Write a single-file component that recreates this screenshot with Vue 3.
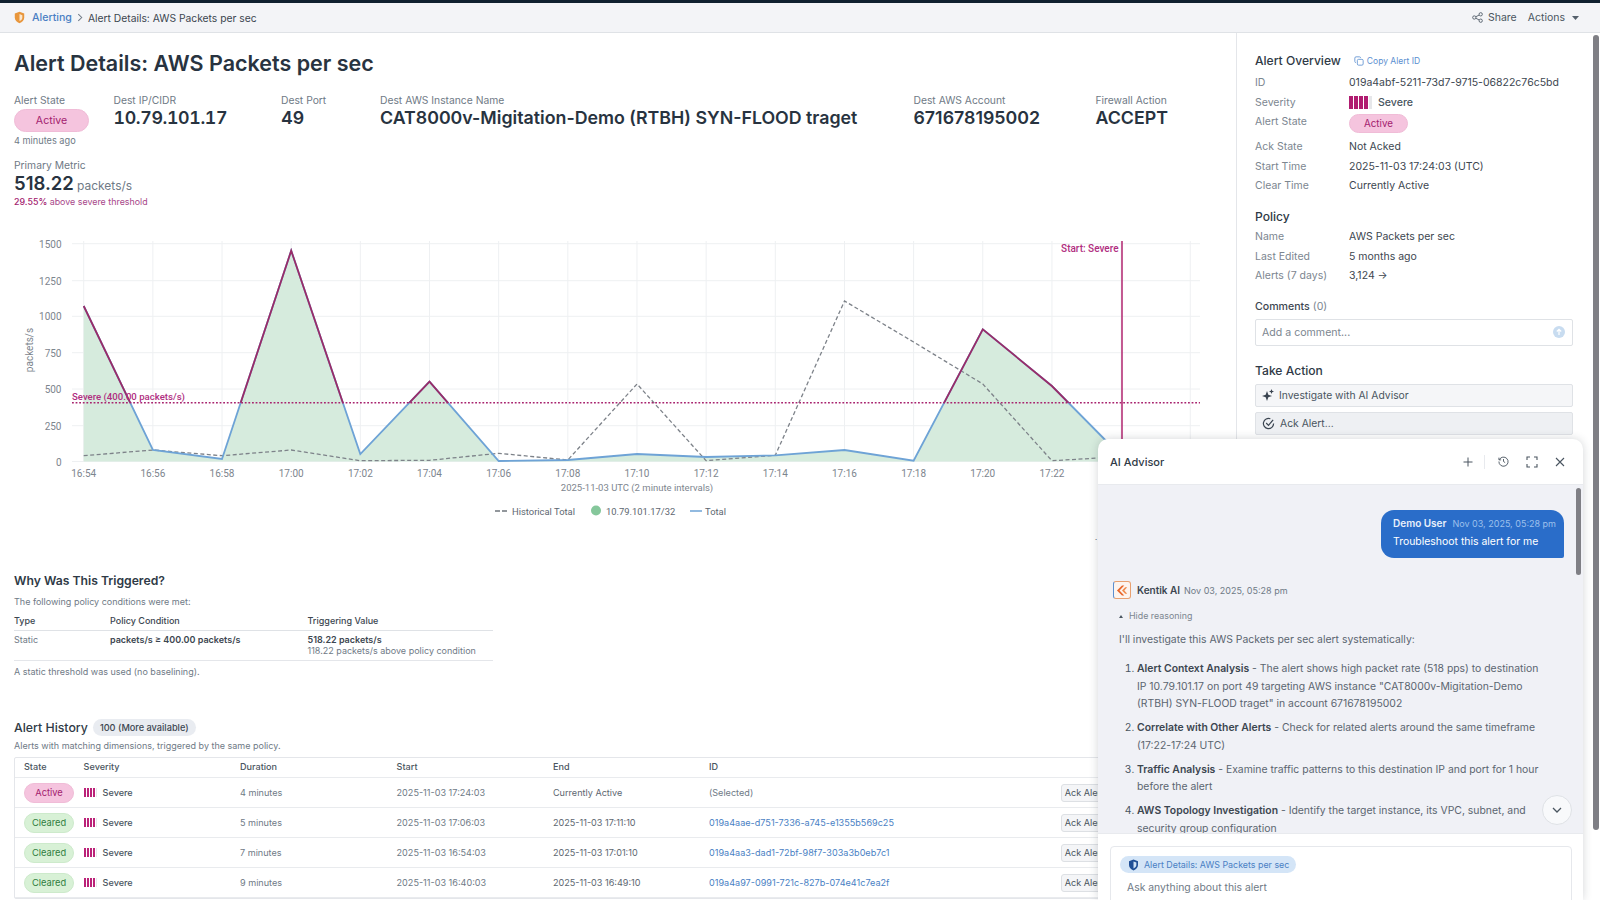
<script setup>
import { computed } from 'vue'

const X0 = 83.7
const DX = 69.16
const xAt = (i) => X0 + i * DX
const top = [306, 450, 459, 250.7, 454, 381.7, 461, 460, 454, 457, 455.3, 450, 460.7, 329.3, 386, 456]
const hist = [455.7, 450, 455.7, 450, 460.7, 460.3, 453.3, 460, 384, 460.7, 455.3, 301, 342, 384, 460.7, 456.7]
const pts = (a) => a.map((y, i) => `${xAt(i).toFixed(1)},${y}`).join(' ')
const linePts = computed(() => pts(top))
const histPts = computed(() => pts(hist))
const areaPts = computed(() => `${X0},461.5 ${pts(top)} ${xAt(15).toFixed(1)},461.5`)
const ticks = ['16:54','16:56','16:58','17:00','17:02','17:04','17:06','17:08','17:10','17:12','17:14','17:16','17:18','17:20','17:22','17:24','17:26']
const yTicks = [['1500',243.7],['1250',280.7],['1000',316.3],['750',352.7],['500',389],['250',425.7],['0',461.5]]

const metrics = [
  { label: 'Dest IP/CIDR', value: '10.79.101.17', tab: true },
  { label: 'Dest Port', value: '49' },
  { label: 'Dest AWS Instance Name', value: 'CAT8000v-Migitation-Demo (RTBH) SYN-FLOOD traget' },
  { label: 'Dest AWS Account', value: '671678195002' },
  { label: 'Firewall Action', value: 'ACCEPT' },
]
const history = [
  { state: 'Active', dur: '4 minutes', start: '2025-11-03 17:24:03', end: 'Currently Active', id: '(Selected)' },
  { state: 'Cleared', dur: '5 minutes', start: '2025-11-03 17:06:03', end: '2025-11-03 17:11:10', id: '019a4aae-d751-7336-a745-e1355b569c25', link: true },
  { state: 'Cleared', dur: '7 minutes', start: '2025-11-03 16:54:03', end: '2025-11-03 17:01:10', id: '019a4aa3-dad1-72bf-98f7-303a3b0eb7c1', link: true },
  { state: 'Cleared', dur: '9 minutes', start: '2025-11-03 16:40:03', end: '2025-11-03 16:49:10', id: '019a4a97-0991-721c-827b-074e41c7ea2f', link: true },
]
const overview = [
  { k: 'ID', v: '019a4abf-5211-73d7-9715-06822c76c5bd' },
  { k: 'Severity', sev: true },
  { k: 'Alert State', badge: true },
  { k: 'Ack State', v: 'Not Acked' },
  { k: 'Start Time', v: '2025-11-03 17:24:03 (UTC)' },
  { k: 'Clear Time', v: 'Currently Active' },
]
const policy = [
  { k: 'Name', v: 'AWS Packets per sec' },
  { k: 'Last Edited', v: '5 months ago' },
  { k: 'Alerts (7 days)', v: '3,124 →' },
]
const steps = [
  { b: 'Alert Context Analysis', t: ' - The alert shows high packet rate (518 pps) to destination IP 10.79.101.17 on port 49 targeting AWS instance "CAT8000v-Migitation-Demo (RTBH) SYN-FLOOD traget" in account 671678195002' },
  { b: 'Correlate with Other Alerts', t: ' - Check for related alerts around the same timeframe (17:22-17:24 UTC)' },
  { b: 'Traffic Analysis', t: ' - Examine traffic patterns to this destination IP and port for 1 hour before the alert' },
  { b: 'AWS Topology Investigation', t: ' - Identify the target instance, its VPC, subnet, and security group configuration' },
]
</script>

<template>
  <div class="app">
    <div class="topline"></div>
    <header class="crumbs">
      <svg class="shield" width="11" height="13" viewBox="0 0 14 16"><path d="M7 .8 13 3v5c0 3.6-2.6 6-6 7.2C3.600 14 1 11.600 1 8V3z" fill="#e8963c"/><path d="M7 3.600 10.600 5v3.200c0 2-1.500 3.400-3.600 4.300z" fill="#fbe6cc"/></svg>
      <a class="crumb-link">Alerting</a>
      <svg width="6" height="9" viewBox="0 0 7 10"><path d="M1.500 1 5.500 5l-4 4" fill="none" stroke="#6f7a86" stroke-width="1.200"/></svg>
      <span class="crumb-cur">Alert Details: AWS Packets per sec</span>
      <span class="grow"></span>
      <svg width="11" height="11" viewBox="0 0 12 12" fill="none" stroke="#55606c" stroke-width="1"><circle cx="2.500" cy="6" r="1.800"/><circle cx="9.500" cy="2.500" r="1.800"/><circle cx="9.500" cy="9.500" r="1.800"/><path d="M4.100 5.200 7.900 3.300M4.100 6.800l3.800 1.900"/></svg>
      <span class="top-act share">Share</span>
      <span class="top-act">Actions</span>
      <svg width="7" height="4" viewBox="0 0 7 4"><path d="M0 0h7L3.500 4z" fill="#55606c"/></svg>
    </header>

    <div class="body">
      <main class="main">
        <h1>Alert Details: AWS Packets per sec</h1>
        <div class="metric-row">
          <div class="state-col">
            <div class="lbl">Alert State</div>
            <span class="badge active big">Active</span>
            <div class="ago">4 minutes ago</div>
          </div>
          <div v-for="m in metrics" :key="m.label" class="metric">
            <div class="lbl">{{ m.label }}</div>
            <div class="val" :class="{ tab: m.tab }">{{ m.value }}</div>
          </div>
        </div>
        <div class="primary">
          <div class="lbl">Primary Metric</div>
          <div class="pv"><b>518.22</b> <span>packets/s</span></div>
          <div class="pct"><em>29.55%</em> above severe threshold</div>
        </div>

        <svg class="chart" width="1237" height="320" viewBox="0 220 1237 320">
          <defs>
            <clipPath id="above"><rect x="0" y="220" width="1237" height="182.700"/></clipPath>
          </defs>
          <g stroke="#eef0f2" stroke-width="1">
            <line v-for="t in yTicks" :key="t[0]" x1="72" x2="1200" :y1="t[1]" :y2="t[1]"/>
            <line v-for="(t, i) in ticks" :key="t" :x1="xAt(i)" :x2="xAt(i)" y1="241" y2="461.500"/>
          </g>
          <polygon :points="areaPts" fill="#d6ebdd"/>
          <polyline :points="histPts" fill="none" stroke="#7d8289" stroke-width="1.300" stroke-dasharray="4 2.500"/>
          <polyline :points="linePts" fill="none" stroke="#6ea3d6" stroke-width="1.800"/>
          <polyline :points="linePts" fill="none" stroke="#9a2c68" stroke-width="1.800" clip-path="url(#above)"/>
          <line x1="72" x2="1200" y1="402.700" y2="402.700" stroke="#a8246f" stroke-width="1.400" stroke-dasharray="1.800 1.800"/>
          <line x1="1122" x2="1122" y1="241" y2="461" stroke="#b0256f" stroke-width="1.500"/>
          <text x="72" y="400" class="t-sev small-sev">Severe (400.00 packets/s)</text>
          <text x="1118.500" y="252" text-anchor="end" class="t-sev">Start: Severe</text>
          <g class="t-axis">
            <text v-for="t in yTicks" :key="t[0]" x="61.500" :y="t[1] + 4" text-anchor="end">{{ t[0] }}</text>
            <text v-for="(t, i) in ticks.slice(0, 15)" :key="t" :x="xAt(i)" y="477" text-anchor="middle">{{ t }}</text>
            <text class="t-title" x="637" y="491" text-anchor="middle">2025-11-03 UTC (2 minute intervals)</text>
            <text transform="translate(33 350) rotate(-90)" text-anchor="middle">packets/s</text>
          </g>
          <g class="t-legend">
            <line x1="495" x2="507" y1="511" y2="511" stroke="#6f757c" stroke-width="1.300" stroke-dasharray="5 2"/>
            <text x="512" y="514.500">Historical Total</text>
            <circle cx="596" cy="510.500" r="5" fill="#85c79b"/>
            <text x="606" y="514.500">10.79.101.17/32</text>
            <line x1="690" x2="702" y1="511" y2="511" stroke="#6ea3d6" stroke-width="1.500"/>
            <text x="705" y="514.500">Total</text>
          </g>
          <text x="1095" y="546" class="t-legend">b</text>
        </svg>

        <section class="why">
          <h2>Why Was This Triggered?</h2>
          <p class="sub">The following policy conditions were met:</p>
          <div class="cond">
            <div class="cond-head"><span>Type</span><span>Policy Condition</span><span>Triggering Value</span></div>
            <div class="cond-row">
              <span class="muted">Static</span>
              <span class="strong">packets/s ≥ 400.00 packets/s</span>
              <span><span class="strong block">518.22 packets/s</span><span class="muted block">118.22 packets/s above policy condition</span></span>
            </div>
          </div>
          <p class="sub note">A static threshold was used (no baselining).</p>
        </section>

        <section class="hist">
          <div class="hist-title"><h2>Alert History</h2><span class="chip">100 (More available)</span></div>
          <p class="sub">Alerts with matching dimensions, triggered by the same policy.</p>
          <div class="table">
            <div class="tr th"><span>State</span><span>Severity</span><span>Duration</span><span>Start</span><span>End</span><span>ID</span><span></span></div>
            <div v-for="r in history" :key="r.start" class="tr">
              <span class="badge-cell"><span class="badge" :class="r.state === 'Active' ? 'active' : 'cleared'">{{ r.state }}</span></span>
              <span class="sev-cell"><span class="bars small"><i></i><i></i><i></i><i></i><i class="off"></i></span><span class="sev-name">Severe</span></span>
              <span class="muted">{{ r.dur }}</span>
              <span class="muted">{{ r.start }}</span>
              <span class="muted2">{{ r.end }}</span>
              <span :class="r.link ? 'link' : 'muted'">{{ r.id }}</span>
              <span class="badge-cell"><button class="ack">Ack Alert</button></span>
            </div>
          </div>
        </section>
      </main>

      <aside class="side">
        <div class="side-title"><h3>Alert Overview</h3>
          <span class="copy"><svg width="10" height="10" viewBox="0 0 12 12" fill="none" stroke="#5b8fd0" stroke-width="1"><rect x="4" y="4" width="7" height="7" rx="1.500"/><path d="M8 2.200A1.500 1.500 0 0 0 6.500 1h-4A1.500 1.500 0 0 0 1 2.500v4A1.500 1.500 0 0 0 2.200 8"/></svg>Copy Alert ID</span>
        </div>
        <dl class="kv">
          <template v-for="o in overview" :key="o.k">
            <dt>{{ o.k }}</dt>
            <dd v-if="o.sev" class="sev-cell"><span class="bars"><i></i><i></i><i></i><i></i><i class="off"></i></span><span class="sev-name big-sev">Severe</span></dd>
            <dd v-else-if="o.badge" class="badge-dd"><span class="badge active">Active</span></dd>
            <dd v-else>{{ o.v }}</dd>
          </template>
        </dl>
        <h3 class="policy">Policy</h3>
        <dl class="kv">
          <template v-for="o in policy" :key="o.k"><dt>{{ o.k }}</dt><dd>{{ o.v }}</dd></template>
        </dl>
        <div class="comments"><b>Comments</b> <span>(0)</span></div>
        <div class="comment-input"><span>Add a comment...</span>
          <svg width="12" height="12" viewBox="0 0 12 12"><circle cx="6" cy="6" r="6" fill="#c8dcf0"/><path d="M6 9V3.500M3.800 5.500 6 3.300l2.200 2.200" fill="none" stroke="#fff" stroke-width="1.200"/></svg>
        </div>
        <h3 class="take">Take Action</h3>
        <button class="side-btn"><svg width="12" height="12" viewBox="0 0 12 12" fill="#3a4450"><path d="M5 2 6.300 5.700 10 7 6.300 8.300 5 12 3.700 8.300 0 7 3.700 5.700z"/><path d="M9.500 0 10.200 1.800 12 2.500 10.200 3.200 9.500 5 8.800 3.200 7 2.500 8.800 1.800z"/></svg>Investigate with AI Advisor</button>
        <button class="side-btn gray"><svg width="13" height="13" viewBox="0 0 14 14" fill="none" stroke="#3a4450" stroke-width="1.300"><path d="M12.500 7A5.500 5.500 0 1 1 9 1.900"/><path d="M4.500 6.500 7 9l5-6"/></svg>Ack Alert...</button>
      </aside>
    </div>

    <div class="page-scroll"></div>

    <section class="advisor">
      <header class="adv-head">
        <span class="adv-title">AI Advisor</span>
        <span class="grow"></span>
        <svg class="hi plus" width="10" height="10" viewBox="0 0 10 10"><path d="M5 .5v9M.5 5h9" stroke="#4a5560" stroke-width="1"/></svg>
        <span class="vdiv"></span>
        <svg class="hi hist-i" width="11" height="11" viewBox="0 0 12 12" fill="none" stroke="#4a5560" stroke-width="1"><path d="M1.500 4A5 5 0 1 1 1 6"/><path d="M1 1.800V4.200h2.400M6 3.300V6l1.800 1.200"/></svg>
        <svg class="hi exp" width="12" height="12" viewBox="0 0 12 12" fill="none" stroke="#4a5560" stroke-width="1.100"><path d="M1 4V1h3M8 1h3v3M11 8v3H8M4 11H1V8"/></svg>
        <svg class="hi cls" width="10" height="10" viewBox="0 0 10 10"><path d="m1 1 8 8M9 1l-8 8" stroke="#4a5560" stroke-width="1.100"/></svg>
      </header>
      <div class="adv-body">
        <div class="bubble-row">
          <div class="bubble">
            <div class="bubble-top"><b>Demo User</b><span>Nov 03, 2025, 05:28 pm</span></div>
            <p>Troubleshoot this alert for me</p>
          </div>
        </div>
        <div class="ai-head">
          <span class="ai-logo"><svg width="12" height="11" viewBox="0 0 13 12"><path d="M6.500 0.500 1 6l5.500 5.500h2.500L3.800 6 9 0.500z" fill="#e8672c"/><path d="M10 2.500 6.500 6l3.500 3.500h2.200L9 6l3.200-3.500z" fill="#ef8a4a"/></svg></span>
          <b>Kentik AI</b><span>Nov 03, 2025, 05:28 pm</span>
        </div>
        <div class="reason"><i></i>Hide reasoning</div>
        <p class="intro">I'll investigate this AWS Packets per sec alert systematically:</p>
        <ol>
          <li v-for="s in steps" :key="s.b"><b>{{ s.b }}</b>{{ s.t }}</li>
        </ol>
        <div class="adv-scroll"></div>
        <button class="down"><svg width="10" height="6" viewBox="0 0 10 6"><path d="m1 1 4 4 4-4" fill="none" stroke="#4a5560" stroke-width="1.300"/></svg></button>
      </div>
      <footer class="adv-foot">
        <div class="adv-input">
          <span class="ctx"><svg width="11" height="12" viewBox="0 0 14 16"><path d="M7 .8 13 3v5c0 3.600-2.600 6-6 7.200C3.600 14 1 11.600 1 8V3z" fill="#1f4f96"/><path d="M7 3.200 10.800 4.700v3.400c0 2.100-1.600 3.600-3.800 4.500z" fill="#cfe2f5"/></svg>Alert Details: AWS Packets per sec</span>
          <div class="ask">Ask anything about this alert</div>
        </div>
      </footer>
    </section>
  </div>
</template>

<style>
html, body { margin: 0; height: 100%; overflow: hidden; background: #fff; }
</style>

<style scoped>
.app { position: relative; width: 1600px; height: 900px; overflow: hidden; display: flex; flex-direction: column; font-family: Inter, "Noto Sans", sans-serif; color: #2b3642; background: #fff; font-size: 11px; }
.topline { height: 3px; background: #10202f; flex: none; }
.crumbs { height: 30px; flex: none; box-sizing: border-box; display: flex; align-items: center; padding: 0 21px 0 14px; background: #f3f4f7; border-bottom: 1px solid #dfe2e6; font-size: 10.300px; }
.shield { margin-right: 4px; }
.crumb-link { color: #4a7fc4; margin: 0 5px 0 3px; font-weight: 500; font-size: 10.600px; }
.crumb-cur { margin-left: 5px; color: #3c4650; }
.grow { flex: 1; }
.top-act { color: #4a5560; font-size: 10.500px; }
.share { margin: 0 11px 0 5px; }
.top-act + svg { margin-left: 7px; }

.body { flex: 1; display: flex; min-height: 0; }
.main { width: 1237px; flex: none; box-sizing: border-box; border-right: 1px solid #e4e6ea; overflow: hidden; }
h1 { margin: 0; padding: 15px 0 0 14px; font-size: 21.500px; line-height: 30px; font-weight: 600; color: #283340; }
.metric-row { display: grid; grid-template-columns: 99.500px 167.500px 99px 533.500px 182px auto; padding: 15px 0 0 14px; }
.lbl { color: #6f7a86; font-size: 10.300px; line-height: 14px; }
.val { font-size: 17.800px; font-weight: 600; line-height: 22px; color: #283340; }
.val.tab { font-variant-numeric: tabular-nums; letter-spacing: -.35px; }
.badge { display: inline-flex; align-items: center; justify-content: center; width: 59px; height: 19px; border-radius: 10px; font-size: 9.800px; box-sizing: border-box; }
.badge.big { width: 75px; height: 23px; border-radius: 12px; font-size: 10.600px; margin-top: 2px; }
.active { background: #f5c4de; color: #a3216e; border: 1px solid #f0bcd7; }
.cleared { background: #d8f1d6; color: #2f7d3c; border: 1px solid #cdeacb; }
.ago { color: #6f7a86; font-size: 9.200px; line-height: 14px; margin-top: 2px; }
.primary { padding: 10px 0 0 14px; }
.pv { line-height: 22px; }
.pv b { font-size: 18.500px; font-weight: 600; color: #283340; }
.pv span { font-size: 12px; color: #6f7a86; }
.pct { font-size: 8.900px; line-height: 13px; color: #a8478a; margin-top: -2px; }
.pct em { font-style: normal; color: #a3216e; font-weight: 500; }

.chart { display: block; margin-top: 12px; }
.t-sev { font: 500 10px Roboto, sans-serif; fill: #b02d80; }
.small-sev { font-size: 9.600px; }
.t-axis text { font: 10px Roboto, sans-serif; fill: #7d858e; }
.t-axis .t-title { font-size: 9.500px; }
.t-legend, .t-legend text { font: 9.400px Roboto, sans-serif; fill: #5d6670; }

h2 { margin: 0; font-size: 12.200px; line-height: 18px; font-weight: 600; color: #2f3a46; }
.why { padding: 33px 0 0 14px; width: 479px; margin-top: -1px; }
.sub { margin: 5px 0 0; font-size: 9px; line-height: 13px; color: #6f7a86; }
.cond { margin-top: 4px; font-size: 9px; }
.cond-head, .cond-row { display: grid; grid-template-columns: 96px 197.500px 1fr; }
.cond-head { height: 19px; box-sizing: border-box; align-items: center; color: #3c4650; font-weight: 500; border-bottom: 1px solid #dfe2e6; padding-bottom: 1px; }
.cond-row { padding: 3px 0 3.500px; border-bottom: 1px solid #e4e6ea; line-height: 11px; }
.strong { font-weight: 600; color: #3c4650; }
.block { display: block; }
.muted { color: #6f7a86; }
.muted2 { color: #5d6670; }
.note { margin-top: 4.500px; }
.hist { padding: 40.500px 0 0 14px; }
.hist-title { display: flex; align-items: center; gap: 5px; }
.hist-title h2 { font-size: 12.300px; font-weight: 500; }
.chip { background: #e9ecf1; border-radius: 9px; font-size: 9.200px; font-weight: 500; padding: 0 7px; line-height: 17px; color: #3c4650; }
.hist .sub { margin-top: 2.500px; }
.table { margin-top: 5px; width: 1230px; border: 1px solid #e4e6ea; border-radius: 2px; font-size: 9.100px; box-sizing: border-box; }
.tr { display: grid; grid-template-columns: 59.600px 156.400px 156.600px 156.400px 156px 351.700px 1fr; padding-left: 9px; height: 30px; align-items: center; border-bottom: 1px solid #e9ebee; box-sizing: border-box; }
.th { height: 20px; color: #4a5560; font-weight: 500; padding-bottom: 2px; }
.badge-cell { display: flex; align-items: center; }
.tr .badge { width: 50px; height: 20px; font-size: 9.300px; }
.sev-cell { display: flex; align-items: center; gap: 6px; }
.bars { display: inline-flex; gap: 1.500px; }
.bars i { width: 3.500px; height: 13px; background: #b01c70; }
.bars i.off { width: 3px; background: #e6e7ea; }
.bars.small { gap: .750px; }
.bars.small i { width: 2.250px; height: 9px; background: #bb2278; }
.bars.small i.off { width: 1px; background: #e6e7ea; }
.sev-name { color: #4a5560; font-weight: 500; }
.link { color: #4a7fc4; }
.ack { font: 9.100px Inter, sans-serif; color: #4a5560; background: #f4f5f7; border: 1px solid #dde0e4; border-radius: 3px; height: 18px; padding: 0 3px; width: 70px; text-align: left; }

.side { flex: 1; box-sizing: border-box; padding: 18px 27px 0 18px; }
.side-title { display: flex; align-items: center; gap: 13px; height: 20px; }
h3 { margin: 0; font-size: 12.100px; font-weight: 500; color: #2f3a46; line-height: 18px; }
.copy { display: inline-flex; align-items: center; gap: 3px; color: #5b8fd0; font-size: 8.500px; }
.kv { margin: 0; display: grid; grid-template-columns: 94px 1fr; font-size: 10.500px; line-height: 19.500px; }
.kv dt { color: #7c8690; }
.kv dd { margin: 0; color: #3c4650; }
.side-title + .kv { margin-top: 2px; }
.big-sev { font-size: 10.600px; }
.badge-dd { height: 23px; padding-top: 2px; }
.badge-dd .badge { vertical-align: top; }
.policy { margin-top: 12px; }
.policy + .kv { margin-top: 1.500px; }
.comments { margin-top: 13.500px; font-size: 10.600px; line-height: 16px; color: #7c8690; }
.comments b { font-weight: 500; color: #3c4650; }
.comment-input { margin-top: 3.600px; height: 27px; box-sizing: border-box; border: 1px solid #dfe2e6; border-radius: 2px; display: flex; justify-content: space-between; align-items: center; padding: 0 7px 0 6px; color: #7c8690; font-size: 10.600px; }
.take { margin-top: 16px; }
.side-btn { display: flex; width: 100%; height: 23px; align-items: center; gap: 5px; padding: 0 6px; border: 1px solid #dfe2e6; border-radius: 2px; background: #f5f6f8; font: 10.350px Inter, sans-serif; color: #4a5560; margin-top: 4px; box-sizing: border-box; }
.side-btn.gray { background: #eef0f3; margin-top: 5px; }

.page-scroll { position: absolute; left: 1593px; top: 35px; width: 6px; height: 795px; background: #7f7f85; border-radius: 3px; z-index: 1; }

.advisor { position: absolute; left: 1098px; top: 439px; width: 485px; height: 461px; z-index: 2; display: flex; flex-direction: column; background: #fff; border-radius: 10px 10px 0 0; box-shadow: 0 0 10px rgba(40, 50, 60, .2); overflow: hidden; }
.adv-head { height: 46px; flex: none; display: flex; align-items: center; padding: 0 18px 0 12px; box-sizing: border-box; border-bottom: 1px solid #e8eaee; }
.adv-title { font-size: 11px; font-weight: 500; color: #2f3a46; }
.vdiv { width: 1px; height: 14px; background: #e8eaee; margin: 0 13px 0 11px; }
.exp { margin-left: 17px; }
.cls { margin-left: 17px; }
.adv-body { flex: 1; position: relative; background: #f0f1f6; overflow: hidden; font-size: 10.400px; color: #5b6570; }
.bubble-row { display: flex; justify-content: flex-end; padding: 25px 19px 0 0; }
.bubble { box-sizing: border-box; width: 183px; height: 48px; background: #2a6dc9; color: #fff; border-radius: 13px 13px 2px 13px; padding: 7px 12px; font-size: 10px; }
.bubble-top { white-space: nowrap; }
.bubble b { font-weight: 600; color: #e8f0fb; }
.bubble span { margin-left: 6px; color: #9dc0ec; font-size: 9px; }
.bubble p { margin: 6px 0 0; font-size: 10.450px; line-height: 14px; }
.ai-head { display: flex; align-items: center; margin: 23px 0 0 15px; font-size: 10px; gap: 6px; }
.ai-head b { font-weight: 600; color: #3c4650; }
.ai-head span:last-child { color: #6f7a86; font-size: 9px; margin-left: -2px; }
.ai-logo { width: 18px; height: 18px; box-sizing: border-box; border: 1px solid; border-color: #e8a070 #e8a070 #e8a070 #5b8fd0; border-radius: 3px; display: flex; align-items: center; justify-content: center; background: #fdf4ee; }
.reason { margin: 10px 0 0 21px; font-size: 8.900px; line-height: 14px; color: #7c8690; display: flex; align-items: center; }
.reason i { width: 0; height: 0; border: 2.500px solid transparent; border-bottom: 3.500px solid #4a5560; border-top: 0; margin-right: 6px; }
.intro { margin: 9px 0 0 21px; line-height: 16px; }
ol { margin: 12px 0 0; padding: 0 35px 0 39px; }
li { line-height: 17.700px; margin-bottom: 6px; }
li::marker { color: #4a5560; }
li b { font-weight: 600; color: #3c4650; }
.adv-scroll { position: absolute; right: 2px; top: 3px; width: 5px; height: 87px; background: #7f7f85; border-radius: 3px; }
.down { position: absolute; left: 444px; top: 310px; width: 30px; height: 30px; padding: 0; border-radius: 50%; border: 1px solid #dfe2e6; background: #f8f9fb; display: flex; align-items: center; justify-content: center; }
.adv-foot { height: 67px; flex: none; box-sizing: border-box; padding: 12px 11px 0 12px; background: #fff; border-top: 1px solid #e8eaee; }
.adv-input { border: 1px solid #e6e8ec; border-radius: 4px 4px 0 0; height: 60px; box-sizing: border-box; padding: 9px; }
.ctx { display: inline-flex; align-items: center; gap: 5px; height: 17px; padding: 0 7px 0 8px; border-radius: 9px; background: #d4e5f7; color: #4a7fc4; font-size: 8.900px; }
.ask { margin: 7px 0 0 7px; font-size: 10.400px; color: #6f7a86; }
</style>
